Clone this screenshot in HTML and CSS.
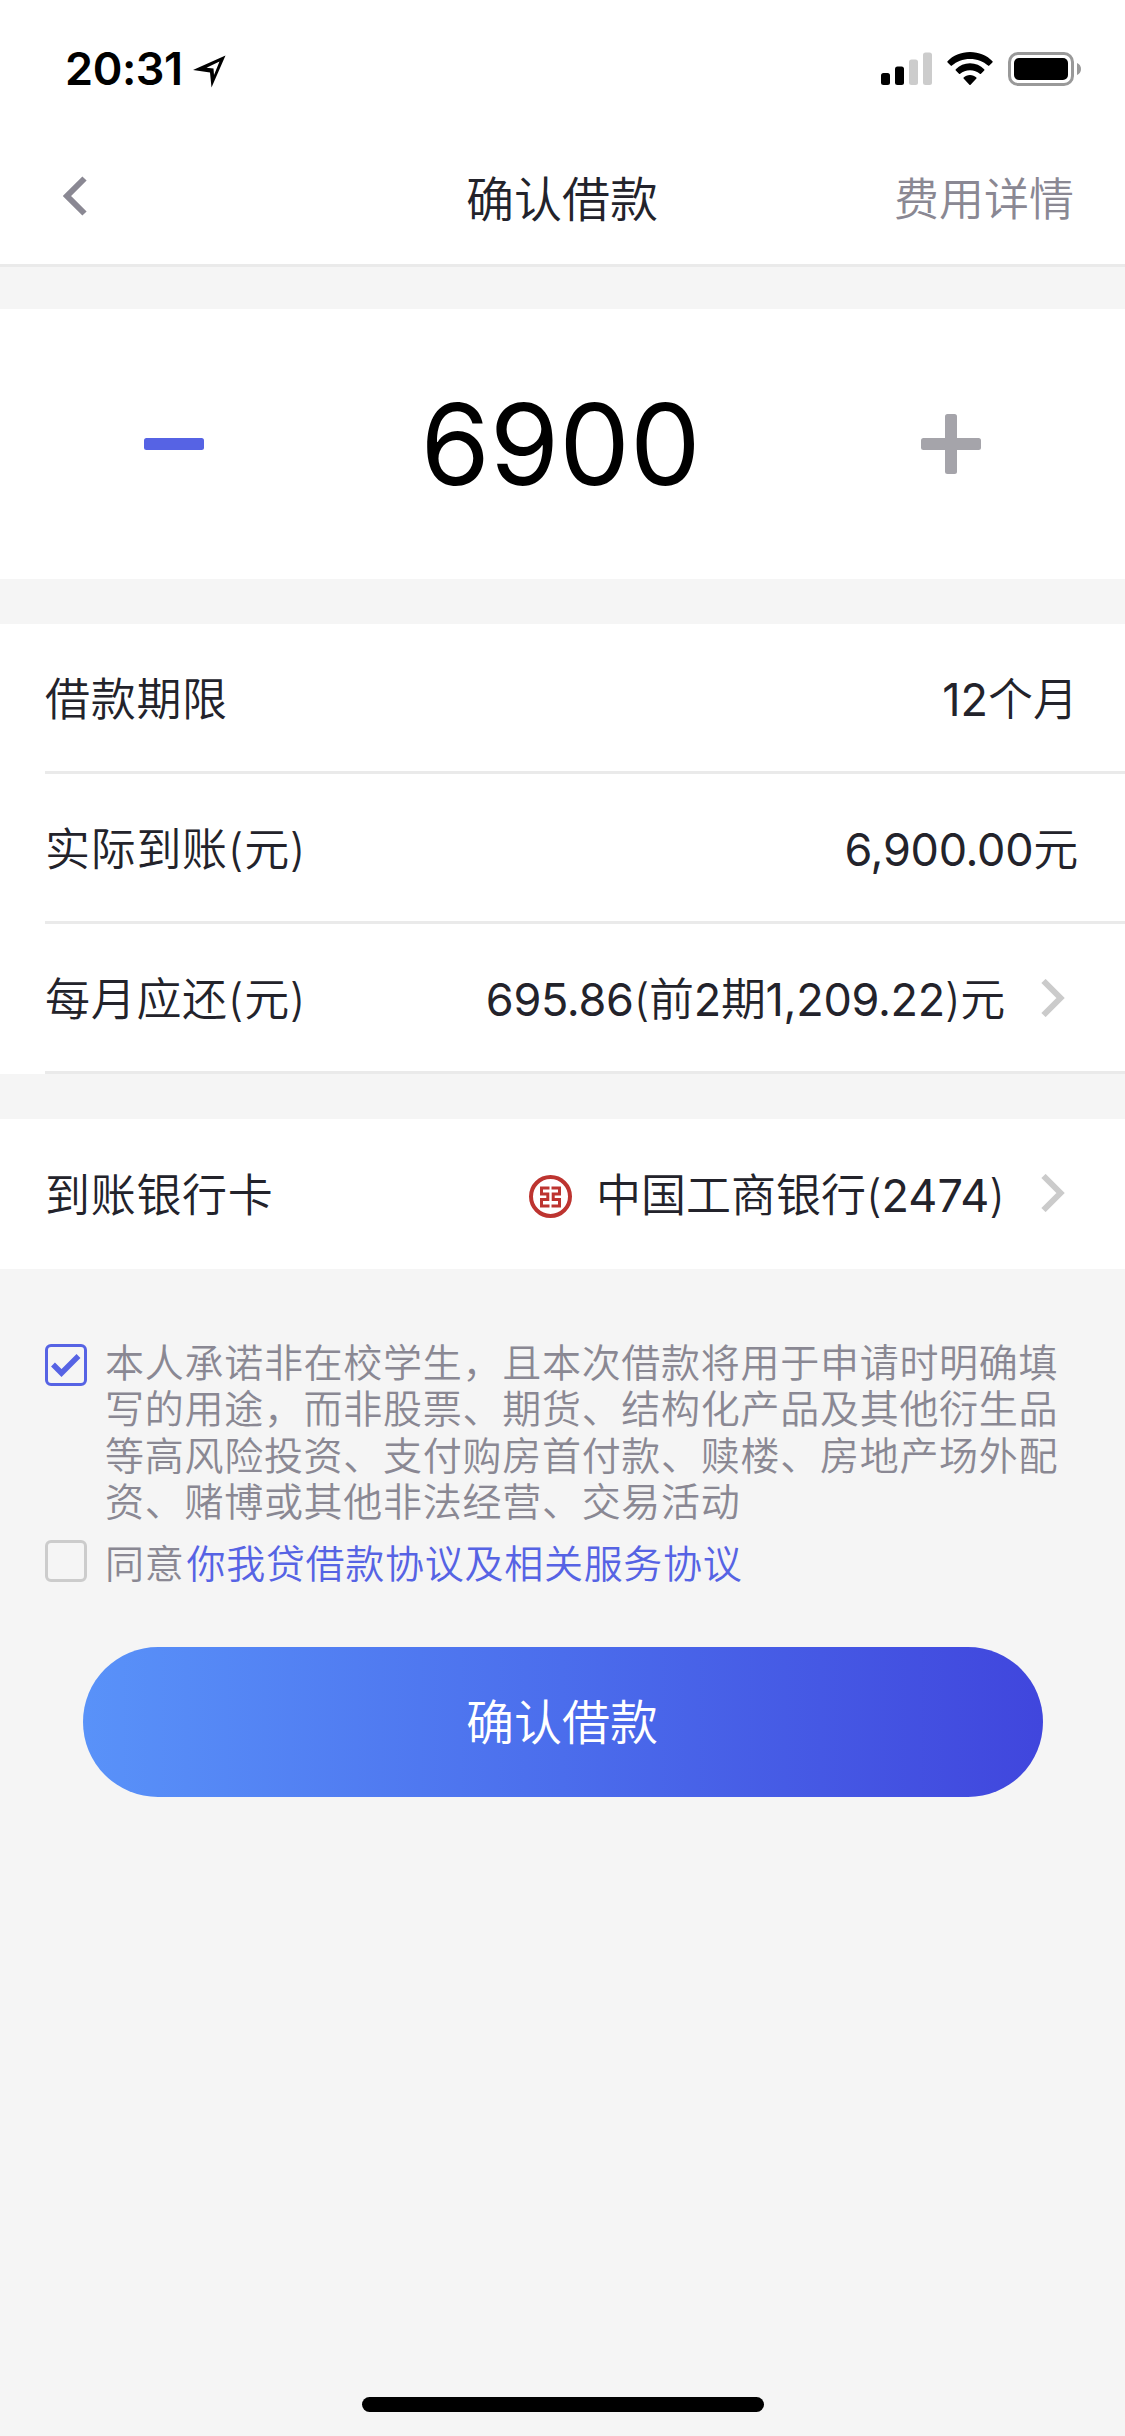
FILE: index.html
```html
<!DOCTYPE html>
<html lang="zh-CN">
<head>
<meta charset="utf-8">
<title>确认借款</title>
<link rel="stylesheet" href="styles.css">
</head>
<body>
<div class="screen">
  <header class="header">
    <div class="status">
      <div class="status-left">
        <span class="time">20:31</span>
        <svg class="location" width="33" height="33" viewBox="0 0 33 33"><path fill-rule="evenodd" d="M32.5 .5 18.5 32.5 17 17.5 0 15ZM26.500 6.500 13.500 12.800 20.500 13.600 21 20Z"/></svg>
      </div>
      <div class="status-right">
        <svg class="signal" width="51" height="33" viewBox="0 0 51 33"><rect y="21" width="9" height="12" rx="2.500"/><rect x="14" y="14.500" width="9" height="18.500" rx="2.500"/><g fill="#ccc"><rect x="28" y="7.500" width="9" height="25.500" rx="2.500"/><rect x="42" y=".5" width="9" height="32.500" rx="2.500"/></g></svg>
        <svg class="wifi" width="46" height="34" viewBox="0 0 46 34"><path d="M23 0C32 0 40 3.500 45.500 9.200Q46 9.800 45.400 10.400L42.300 13.600Q41.700 14.200 41.100 13.600C36.300 9.300 30.300 6.900 23 6.900S9.700 9.300 4.900 13.600Q4.300 14.200 3.700 13.600L.6 10.400Q0 9.800 .5 9.200C6 3.500 14 0 23 0ZM23 11.300C28.600 11.300 33.500 13.600 37.200 17.200Q37.800 17.900 37.200 18.500L34 21.700Q33.400 22.300 32.800 21.700C30.100 19.500 27 18.200 23 18.200S15.900 19.500 13.200 21.700Q12.600 22.300 12 21.700L8.800 18.500Q8.200 17.900 8.800 17.200C12.500 13.600 17.400 11.300 23 11.300ZM23 23C25.500 23 27.700 23.900 29.300 25.400Q30 26 29.400 26.600L23.600 32.700Q23 33.300 22.400 32.700L16.600 26.600Q16 26 16.700 25.400C18.300 23.900 20.500 23 23 23Z"/></svg>
        <svg class="battery" width="74" height="34" viewBox="0 0 74 34"><rect x="1.500" y="1.500" width="63" height="31" rx="8.500" fill="none" stroke="#999" stroke-width="3"/><rect x="6" y="6" width="54" height="22" rx="5"/><path d="M69 11C71.500 12 73 14.300 73 17S71.500 22 69 23Z" fill="#999"/></svg>
      </div>
    </div>
    <nav class="nav">
      <svg class="back" width="24" height="40" viewBox="0 0 24 40"><path d="M21.500 2.500 4 20 21.500 37.500" fill="none" stroke="#8a8893" stroke-width="6"/></svg>
      <h1 class="title">确认借款</h1>
      <a class="detail">费用详情</a>
    </nav>
  </header>

  <section class="amount">
    <svg width="60" height="60" viewBox="0 0 60 60"><rect y="24" width="60" height="12" rx="2.500" fill="#5663e4"/></svg>
    <span class="amount-value">6900</span>
    <svg width="60" height="60" viewBox="0 0 60 60" fill="#a5a4aa"><rect y="24" width="60" height="12" rx="2.500"/><rect x="24" width="12" height="60" rx="2.500"/></svg>
  </section>

  <section class="list">
    <div class="row lined"><span>借款期限</span><span class="value"><b>12</b>个月</span></div>
    <div class="row lined"><span>实际到账(元)</span><span class="value number"><b>6,900.00</b>元</span></div>
    <div class="row lined"><span>每月应还(元)</span><span class="value number with-arrow"><b>695.86</b>(前<b>2</b>期<b>1,209.22</b>)元</span>
      <svg class="arrow" width="24" height="38" viewBox="0 0 24 38"><path d="M2.500 2 19.500 19 2.500 36" fill="none" stroke="#cbcbcb" stroke-width="6"/></svg></div>
  </section>

  <section class="list">
    <div class="row"><span>到账银行卡</span>
      <svg class="bank" width="43" height="43" viewBox="0 0 43 43" fill="none" stroke="#bd3430"><circle cx="21.500" cy="21.500" r="19.500" stroke-width="4"/><path stroke-width="3" d="M20.500 13H12.500V19H18.800V24.500H12.500V31H20.500M22.500 13H30.500V19H24.200V24.500H30.500V31H22.500"/></svg>
      <span class="value with-arrow">中国工商银行(<b>2474</b>)</span>
      <svg class="arrow" width="24" height="38" viewBox="0 0 24 38"><path d="M2.500 2 19.500 19 2.500 36" fill="none" stroke="#cbcbcb" stroke-width="6"/></svg></div>
  </section>

  <section class="terms">
    <div class="term">
      <svg class="check" width="42" height="42" viewBox="0 0 42 42" fill="none" stroke="#5663e4"><rect x="1.500" y="1.500" width="39" height="39" rx="4.500" stroke-width="3"/><path d="M8 20.500 16.500 29 33.500 12" stroke-width="5.500"/></svg>
      <p class="term-text">本人承诺非在校学生，且本次借款将用于申请时明确填<br>写的用途，而非股票、期货、结构化产品及其他衍生品<br>等高风险投资、支付购房首付款、赎楼、房地产场外配<br>资、赌博或其他非法经营、交易活动</p>
    </div>
    <div class="term agree">
      <svg class="check" width="42" height="42" viewBox="0 0 42 42"><rect x="1.500" y="1.500" width="39" height="39" rx="4.500" fill="none" stroke="#ccc" stroke-width="3"/></svg>
      <p class="term-text">同意<a class="link">你我贷借款协议及相关服务协议</a></p>
    </div>
  </section>

  <button class="submit">确认借款</button>
  <div class="home-bar"></div>
</div>
</body>
</html>
```
FILE: styles.css
```css
* { box-sizing: border-box; }
body {
  margin: 0;
  background: #f5f5f5;
  color: #23232b;
  font-family: Inter, "Noto Sans CJK SC", sans-serif;
  font-weight: 350;
}
b { font-weight: 400; }
svg { display: block; flex: none; }
.screen {
  width: 1125px;
  height: 2436px;
  display: flex;
  flex-direction: column;
  overflow: hidden;
}
.header {
  height: 267px;
  background: #fff;
  border-bottom: 3px solid #eaeaea;
}
.status {
  height: 132px;
  padding: 0 43px 0 65px;
  display: flex;
  justify-content: space-between;
}
.status-left, .status-right { display: flex; align-items: flex-start; }
.status-left { gap: 11px; }
.time {
  margin-top: 41px;
  font-size: 45px;
  line-height: 56px;
  font-weight: 600;
  letter-spacing: -.4px;
  color: #000;
  width: 117px;
  white-space: nowrap;
}
.location { margin-top: 55px; }
.signal { margin: 52px 15px 0 0; }
.wifi { margin: 52px 15px 0 0; }
.battery { margin-top: 52px; }
.nav {
  height: 132px;
  display: grid;
  grid-template-columns: 1fr auto 1fr;
  align-items: center;
  padding: 4px 51px 0 63px;
}
.back { margin-top: -8px; }
.title {
  margin: 0 0 0 -13px;
  font-size: 48px;
  line-height: 60px;
  font-weight: inherit;
}
.detail { font-size: 45px; line-height: 60px; color: #8a8893; text-align: right; }
.amount {
  margin-top: 42px;
  height: 270px;
  padding: 0 144px;
  background: #fff;
  display: flex;
  justify-content: space-between;
  align-items: center;
}
.amount-value {
  margin-right: 4px;
  font-size: 112px;
  line-height: 140px;
  font-weight: 400;
  color: #000;
}
.list { margin-top: 45px; background: #fff; }
.row {
  height: 150px;
  margin-left: 45px;
  padding-right: 47px;
  padding-bottom: 4px;
  display: flex;
  align-items: center;
  font-size: 45px;
  letter-spacing: .7px;
}
.lined { padding-bottom: 2px; border-bottom: 3px solid #eaeaea; }
.value { margin-left: auto; letter-spacing: 0; }
.number { letter-spacing: -.3px; }
.with-arrow { margin-right: 36px; }
.arrow { margin: 2px 13px 0 0; }
.bank { margin-left: auto; margin-top: 9px; }
.bank + .value { margin-left: 24px; }
.terms {
  padding: 71px 45px 0;
  display: flex;
  flex-direction: column;
  gap: 15px;
}
.term { display: flex; gap: 18px; align-items: flex-start; }
.term .check { margin-top: 4px; }
.agree .check { margin-top: -1px; }
.term-text {
  margin: 0;
  font-size: 39px;
  line-height: 46.400px;
  letter-spacing: .72px;
  color: #8a8893;
  white-space: nowrap;
}
.link { margin-left: 2px; color: #5663e4; }
.submit {
  width: 960px;
  height: 150px;
  margin: 60px 0 0 83px;
  padding: 2px 2px 0 0;
  border: 0;
  border-radius: 75px;
  background: linear-gradient(90deg, #5992f9, #4b6dec 50%, #4046dd);
  color: #fff;
  font: 350 48px/60px Inter, "Noto Sans CJK SC", sans-serif;
}
.home-bar {
  width: 402px;
  height: 15px;
  margin: auto auto 24px 362px;
  border-radius: 8px;
  background: #000;
}
```
